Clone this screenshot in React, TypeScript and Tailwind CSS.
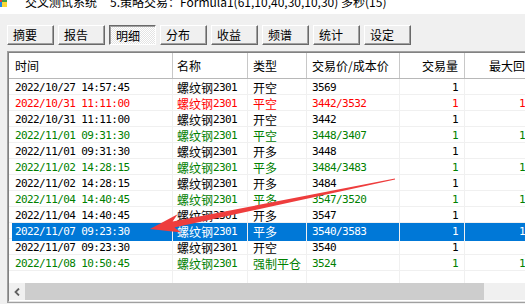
import React from 'react';

// 交易明细窗口：标签按钮 + 列表视图（带选中行和红色标注箭头）

type Tone = 'black' | 'red' | 'green' | 'selected';

type Trade = {
  time: string;
  name: string;
  kind: string;
  price: string;
  qty: string;
  drawdown: string;
  tone: Tone;
};

const trades: Trade[] = [
  { time: '2022/10/27 14:57:45', name: '螺纹钢2301', kind: '开空', price: '3569', qty: '1', drawdown: '0', tone: 'black' },
  { time: '2022/10/31 11:11:00', name: '螺纹钢2301', kind: '平空', price: '3442/3532', qty: '1', drawdown: '17', tone: 'red' },
  { time: '2022/10/31 11:11:00', name: '螺纹钢2301', kind: '开空', price: '3442', qty: '1', drawdown: '0', tone: 'black' },
  { time: '2022/11/01 09:31:30', name: '螺纹钢2301', kind: '平空', price: '3448/3407', qty: '1', drawdown: '17', tone: 'green' },
  { time: '2022/11/01 09:31:30', name: '螺纹钢2301', kind: '开多', price: '3448', qty: '1', drawdown: '0', tone: 'black' },
  { time: '2022/11/02 14:28:15', name: '螺纹钢2301', kind: '平多', price: '3484/3483', qty: '1', drawdown: '17', tone: 'green' },
  { time: '2022/11/02 14:28:15', name: '螺纹钢2301', kind: '开多', price: '3484', qty: '1', drawdown: '0', tone: 'black' },
  { time: '2022/11/04 14:40:45', name: '螺纹钢2301', kind: '平多', price: '3547/3520', qty: '1', drawdown: '18', tone: 'green' },
  { time: '2022/11/04 14:40:45', name: '螺纹钢2301', kind: '开多', price: '3547', qty: '1', drawdown: '0', tone: 'black' },
  { time: '2022/11/07 09:23:30', name: '螺纹钢2301', kind: '平多', price: '3540/3583', qty: '1', drawdown: '18', tone: 'selected' },
  { time: '2022/11/07 09:23:30', name: '螺纹钢2301', kind: '开空', price: '3540', qty: '1', drawdown: '0', tone: 'black' },
  { time: '2022/11/08 10:50:45', name: '螺纹钢2301', kind: '强制平仓', price: '3524', qty: '1', drawdown: '18', tone: 'green' },
];

const tabs = ['摘要', '报告', '明细', '分布', '收益', '频谱', '统计', '设定'];

const toneText: Record<Tone, string> = {
  black: 'text-black',
  red: 'text-[#ff0000]',
  green: 'text-[#008000]',
  selected: 'text-white',
};

const cjk = "font-['Noto_Sans_CJK_SC',sans-serif] text-[12px]";
const mono = "font-['DejaVu_Sans_Mono','Noto_Sans_CJK_SC',monospace] text-[11px] tracking-[-0.6px]";

const cols = 'grid grid-cols-[164px_75px_59px_93px_65px_80px]';

// 汉字用 12px 黑体，数字用等宽字体（模拟宋体半角宽度）
function Mixed({ text }: { text: string }) {
  const parts = text.split(/([\u3000-\u9fff\uff00-\uffef]+)/).filter(Boolean);
  return (
    <>
      {parts.map((p, i) =>
        /[\u3000-\u9fff\uff00-\uffef]/.test(p) ? (
          <span key={i} className={cjk}>{p}</span>
        ) : (
          <span key={i} className={mono}>{p}</span>
        )
      )}
    </>
  );
}

function TabButton({ label, active }: { label: string; active: boolean }) {
  return (
    <div
      className={
        active
          ? `h-[20px] w-[47px] border border-t-[#696969] border-l-[#696969] border-r-white border-b-white shadow-[inset_1px_1px_0_#a0a0a0] bg-[repeating-conic-gradient(#e3e3e3_0_25%,#ffffff_0_50%)] bg-[length:2px_2px] pl-[6px] pt-[1px] leading-[17px] ${cjk}`
          : `h-[20px] w-[47px] border border-t-white border-l-white border-r-[#696969] border-b-[#696969] shadow-[inset_-1px_-1px_0_#a0a0a0] bg-[#f0f0f0] pl-[5px] leading-[17px] ${cjk}`
      }
    >
      {label}
    </div>
  );
}

function TradeRow({ t }: { t: Trade }) {
  const sel = t.tone === 'selected';
  const cell = `flex h-full items-center border-r border-[#f0f0f0] ${sel ? 'bg-[#0078d7]' : ''}`;
  return (
    <div className={`${cols} h-[16px] border-b border-[#f0f0f0] ${toneText[t.tone]}`}>
      <div className="flex h-full border-r border-[#f0f0f0]">
        <div className={`ml-[3px] flex flex-1 items-center pl-[3px] ${sel ? 'bg-[#0078d7]' : ''}`}>
          <span className={mono}>{t.time}</span>
        </div>
      </div>
      <div className={`${cell} pl-[4px]`}>
        <Mixed text={t.name} />
      </div>
      <div className={`${cell} pl-[5px]`}>
        <span className={cjk}>{t.kind}</span>
      </div>
      <div className={`${cell} pl-[5px]`}>
        <span className={mono}>{t.price}</span>
      </div>
      <div className={`${cell} justify-end pr-[6px]`}>
        <span className={mono}>{t.qty}</span>
      </div>
      <div className={`${cell} justify-end pr-[13px]`}>
        <span className={mono}>{t.drawdown}</span>
      </div>
    </div>
  );
}

export default function App() {
  return (
    <div className="relative h-[304px] w-[525px] overflow-hidden bg-[#f0f0f0] text-black">
      {/* 标题栏（被截掉上半部分） */}
      <div className="relative flex h-[14px] items-start overflow-hidden bg-white">
        <svg className="absolute left-[-2px] top-[-2px]" width="9" height="9" viewBox="0 0 9 9">
          <rect x="0" y="0" width="4" height="4" fill="#e53935" />
          <rect x="4" y="0" width="5" height="4" fill="#43a047" />
          <rect x="0" y="4" width="4" height="5" fill="#1e88e5" />
          <rect x="4" y="4" width="5" height="5" fill="#fdd835" />
        </svg>
        <div className={`ml-[25px] mt-[-5px] flex whitespace-nowrap leading-[14px] ${"font-['Noto_Sans_CJK_SC',sans-serif] text-[12px]"}`}>
          <span>交叉测试系统</span>
          <span className="ml-[13px]">5.策略交易：Formula1(61,10,40,30,10,30) 多秒(15)</span>
        </div>
      </div>

      {/* 标签按钮 */}
      <div className="ml-[7px] mt-[11px] flex gap-[4px]">
        {tabs.map((t) => (
          <TabButton key={t} label={t} active={t === '明细'} />
        ))}
      </div>

      {/* 列表视图 */}
      <div className="ml-[7px] mt-[6px] h-[252px] w-[560px] border border-[#a0a0a0]">
        <div className="flex h-full flex-col border border-t-[#828282] border-l-[#828282] border-r-[#e3e3e3] border-b-[#e3e3e3] bg-white">
          <div className={`${cols} h-[26px] shrink-0 border-b border-[#b8b8b8] ${cjk}`}>
            <div className="flex items-center border-r border-[#c8c8c8] pl-[6px]">时间</div>
            <div className="flex items-center border-r border-[#c8c8c8] pl-[4px]">名称</div>
            <div className="flex items-center border-r border-[#c8c8c8] pl-[5px]">类型</div>
            <div className="flex items-center border-r border-[#c8c8c8] pl-[5px]">交易价/成本价</div>
            <div className="flex items-center justify-end border-r border-[#c8c8c8] pr-[6px]">交易量</div>
            <div className="flex items-center justify-end border-r border-[#c8c8c8] pr-[7px]">最大回撤</div>
          </div>

          <div className="h-[204px] shrink-0 overflow-hidden">
            {trades.map((t, i) => (
              <TradeRow key={i} t={t} />
            ))}
            <div className={`${cols} h-[16px]`}>
              <div className="border-r border-[#f0f0f0]" />
              <div className="border-r border-[#f0f0f0]" />
              <div className="border-r border-[#f0f0f0]" />
              <div className="border-r border-[#f0f0f0]" />
              <div className="border-r border-[#f0f0f0]" />
              <div className="border-r border-[#f0f0f0]" />
            </div>
          </div>

          {/* 水平滚动条 */}
          <div className="flex h-[17px] shrink-0 bg-[#f0f0f0]">
            <div className="flex w-[16px] items-center justify-center">
              <svg width="6" height="8" viewBox="0 0 6 8">
                <polyline points="5,0.5 1.5,4 5,7.5" fill="none" stroke="#606060" strokeWidth="1.8" />
              </svg>
            </div>
            <div className="h-full w-[459px] bg-[#cdcdcd]" />
          </div>
        </div>
      </div>

      {/* 红色标注箭头 */}
      <svg className="pointer-events-none absolute left-0 top-0" width="525" height="304" viewBox="0 0 525 304">
        <polygon
          points="150,229 177.6,214.2 172.6,221.6 394.9,178.6 395.1,179.4 174.3,227.6 181.4,232.5"
          fill="#ee3d3d"
        />
      </svg>
    </div>
  );
}
